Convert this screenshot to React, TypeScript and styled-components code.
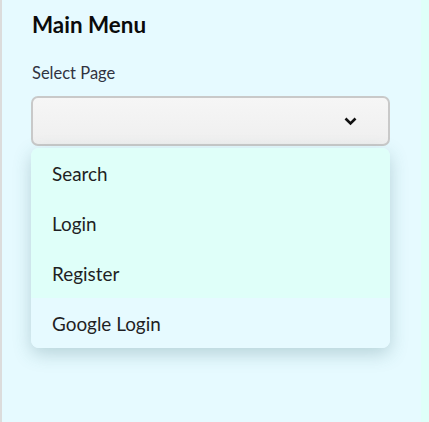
import React from "react";
import styled, { createGlobalStyle } from "styled-components";

const Global = createGlobalStyle`
  html, body { margin: 0; padding: 0; }
  body { font-family: "Lato", "Liberation Sans", sans-serif; background: #dffff9; }
`;

const Page = styled.div`
  display: flex;
  width: 429px;
  height: 422px;
  background: #dffff9;
  overflow: hidden;
`;

const Sidebar = styled.aside`
  width: 421px;
  height: 422px;
  background: #e6faff;
  border-left: 2px solid #dcdcdc;
  box-sizing: border-box;
  padding: 10px 31px 0 29px;
  display: flex;
  flex-direction: column;
`;

const Title = styled.h2`
  margin: 0;
  font-size: 22.4px;
  font-weight: 700;
  color: #0b0b0b;
  line-height: 29px;
  padding-left: 1px;
`;

const Label = styled.label`
  margin-top: 24px;
  font-size: 16.5px;
  color: #31333f;
  line-height: 20px;
  padding-left: 1px;
`;

const SelectWrap = styled.div`
  position: relative;
  margin-top: 13px;
`;

const SelectBox = styled.div`
  height: 50px;
  box-sizing: border-box;
  border: 2px solid #c9c9c9;
  border-radius: 7px;
  background: linear-gradient(#f6f6f6, #efefef);
  display: flex;
  align-items: center;
  justify-content: flex-end;
  padding-right: 31px;
`;

const Menu = styled.ul`
  position: absolute;
  top: 52px;
  left: 0;
  right: 0;
  margin: 0;
  padding: 0;
  list-style: none;
  border-radius: 8px;
  overflow: hidden;
  background: #e6faff;
  box-shadow: 0 6px 18px rgba(60, 110, 120, 0.28);
`;

const Item = styled.li<{ $active?: boolean }>`
  height: 50px;
  display: flex;
  align-items: center;
  padding-left: 21px;
  font-size: 18.9px;
  color: #1f1f24;
  background: ${(p) => (p.$active ? "#dffff9" : "#e6faff")};
`;

const items = ["Search", "Login", "Register", "Google Login"];

export default function App() {
  return (
    <Page>
      <Global />
      <Sidebar>
        <Title>Main Menu</Title>
        <Label>Select Page</Label>
        <SelectWrap>
          <SelectBox>
            <svg width="13" height="9" viewBox="0 0 13 9">
              <path d="M1.5 1.5 L6.5 6.5 L11.5 1.5" fill="none" stroke="#111" strokeWidth="2.6" />
            </svg>
          </SelectBox>
          <Menu>
            {items.map((t, i) => (
              <Item key={t} $active={i < 3}>{t}</Item>
            ))}
          </Menu>
        </SelectWrap>
      </Sidebar>
    </Page>
  );
}
